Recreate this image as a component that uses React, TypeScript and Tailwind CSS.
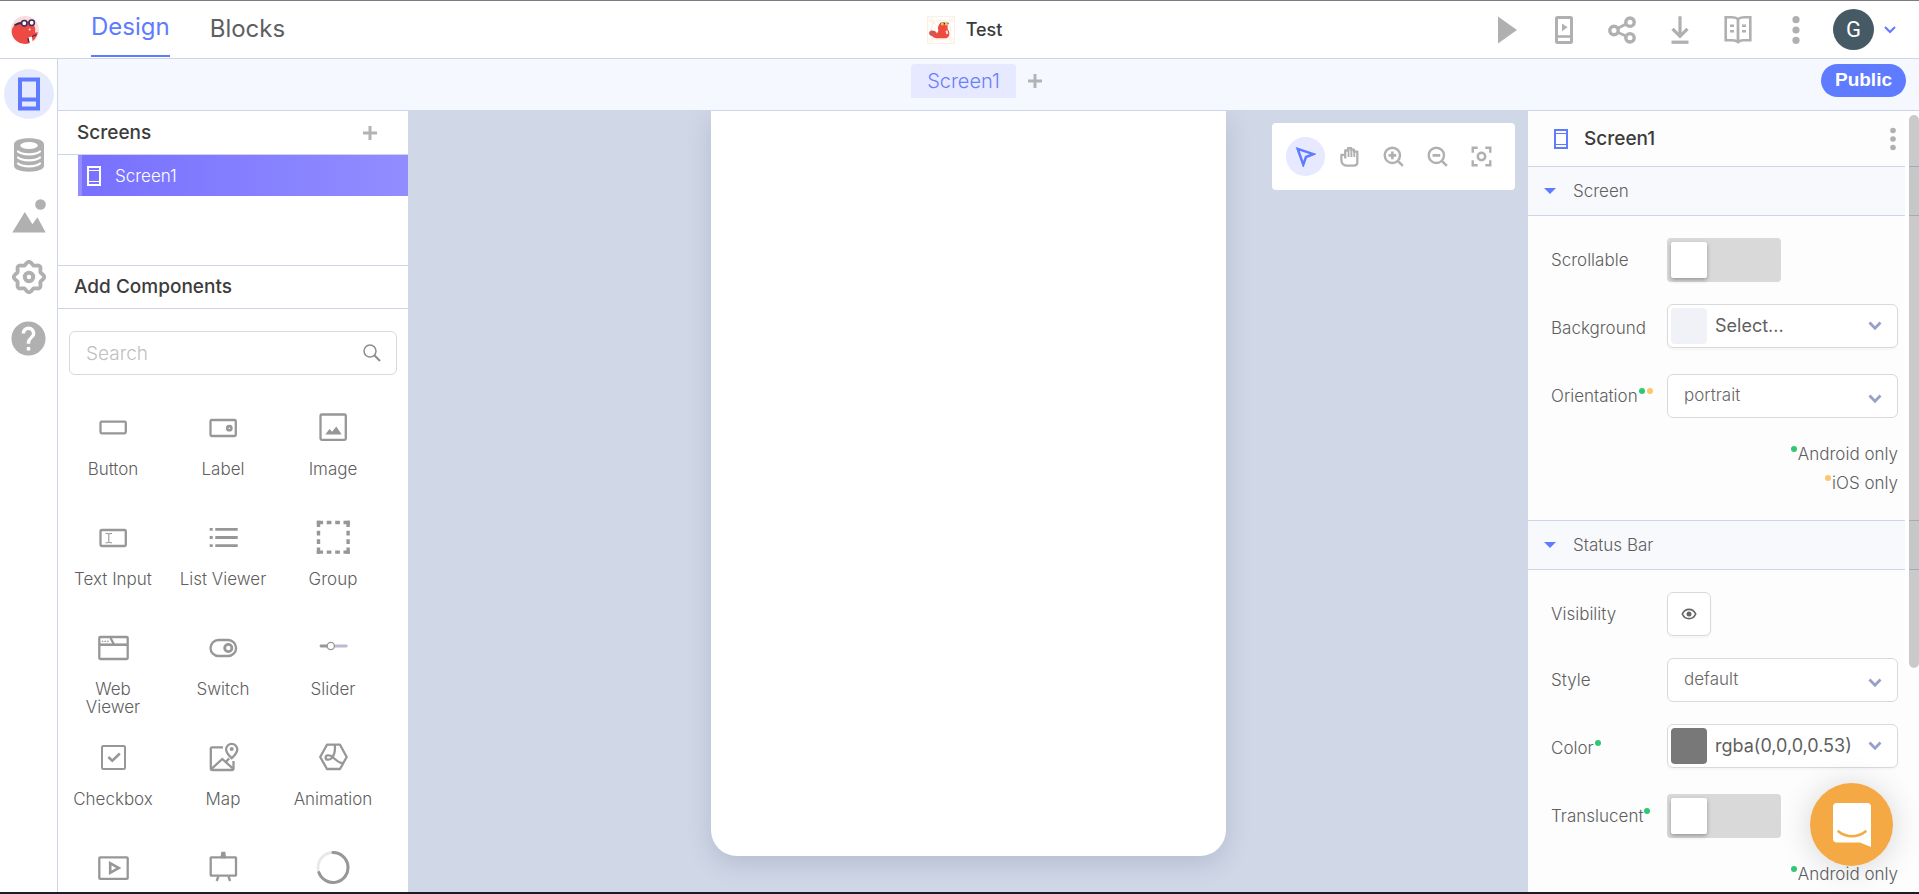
import { ReactNode, useState } from "react";
import { MdHelp } from "react-icons/md";

interface IconProps {
  size?: number;
  box?: number;
  stroke?: number;
  children: ReactNode;
}

function Icon({ size = 34, box = 34, stroke = 2, children }: IconProps) {
  return (
    <svg
      width={size}
      height={size}
      viewBox={`0 0 ${box} ${box}`}
      fill="none"
      stroke="currentColor"
      strokeWidth={stroke}
      className="shrink-0"
      aria-hidden="true"
    >
      {children}
    </svg>
  );
}

// outline of the settings cog: a circle with eight soft lobes
const cogPoints = Array.from({ length: 96 }, (_, i) => {
  const a = (i / 96) * Math.PI * 2;
  const r = 13.8 + 1.4 * Math.cos(a * 8);
  return `${(17 + r * Math.sin(a)).toFixed(2)},${(17 - r * Math.cos(a)).toFixed(2)}`;
}).join(" ");

function BeaverLogo() {
  return (
    <svg width={28} height={28} viewBox="0 0 28 28" aria-hidden="true">
      <circle cx="14" cy="14" r="14" fill="#f9dcdb" />
      <path
        d="M.8 15C1 10.500 5 7.500 9 6c4-1.800 10-1.500 13 1.500 2 2.500 2.600 6 2 9l2.800-.3c-.8 5.400-4.800 10-10.300 11.600C8 29 .4 23 .8 15z"
        fill="#ee4a43"
      />
      <path d="M3.500 9.200c2.500-1.600 5-2.200 8-2.200" stroke="#3b2a5c" strokeWidth="1.800" fill="none" />
      <circle cx="13.300" cy="7.300" r="2.700" fill="#fff" stroke="#3b2a5c" strokeWidth="1.500" />
      <circle cx="20.700" cy="6.800" r="2.700" fill="#fff" stroke="#3b2a5c" strokeWidth="1.500" />
      <circle cx="18.700" cy="13.500" r="1.100" fill="#ffd9d6" />
      <path d="M17.300 21.500l3.400-1 1.200 5.500-2.700 1.500z" fill="#fff" />
      <path d="M17 21.800l.6 4.400M21 20.500l4.500-2" stroke="#3b2a5c" strokeWidth="1.200" />
    </svg>
  );
}

function ProjectLogo() {
  return (
    <svg width={28} height={28} viewBox="0 0 28 28" fill="none" aria-hidden="true">
      <g stroke="#fdf0e2" strokeWidth="1">
        <rect x=".5" y=".5" width="27" height="27" />
        <path d="M5 0v28M23 0v28M0 5h28M0 23h28M0 0l28 28M28 0L0 28" />
        <circle cx="14" cy="14" r="10" />
      </g>
      <ellipse cx="6" cy="17.500" rx="4" ry="2.800" fill="#d8544f" transform="rotate(20 6 17.500)" />
      <path
        d="M5.500 20.500c3-.5 5-3 6-6.500-.6-.800-.8-1.500-.5-2.500C11.500 8.500 13 6.500 16 6.500c3.500 0 5 2 4.700 4.700-.1 1-.2 1.600.3 2.300 1.500 2 1.800 4.800.7 6.800-.8 1.700-2.500 2-5 2H11c-2.300 0-4.500-.6-5.500-1.800z"
        fill="#ee4a3f"
      />
      <path d="M13.500 7.500h8" stroke="#3b2a5c" strokeWidth="1.500" />
      <circle cx="15.300" cy="8" r="1.500" fill="#f6c445" />
      <circle cx="19.300" cy="8" r="1.500" fill="#f6c445" />
      <path d="M18.500 15l2-.8.8 3.500-2 .6z" fill="#fbe3e0" />
    </svg>
  );
}

function PhoneSmallIcon() {
  return (
    <svg width={14} height={20} viewBox="0 0 14 20" fill="none" stroke="currentColor" aria-hidden="true">
      <rect x="1" y="1" width="12" height="18" strokeWidth="2" />
      <path d="M2 4.500h10M2 15.500h10" strokeWidth="1" />
    </svg>
  );
}

function PlusIcon() {
  return (
    <svg width={14} height={14} viewBox="0 0 14 14" stroke="#b3b3b3" strokeWidth="3" aria-hidden="true">
      <path d="M7 0v14M0 7h14" />
    </svg>
  );
}

function Chevron({ className = "" }: { className?: string }) {
  return (
    <svg
      width={14}
      height={10}
      viewBox="0 0 14 10"
      fill="none"
      stroke="#97a0c8"
      strokeWidth="2.800"
      className={className}
      aria-hidden="true"
    >
      <path d="M1.500 1.500L7 7.200l5.500-5.700" />
    </svg>
  );
}

const railItems = [
  {
    label: "Design",
    active: true,
    icon: (
      <Icon>
        <rect x="8" y="2.500" width="18" height="29" strokeWidth="4" />
        <path d="M9 22.500h16" strokeWidth="4" />
      </Icon>
    ),
  },
  {
    label: "Data",
    icon: (
      <Icon>
        <path
          d="M2 6.500C2 2.500 8 .3 17 .3s15 2.200 15 6.200v21c0 4-6 6.200-15 6.200S2 31.500 2 27.500z"
          fill="currentColor"
          stroke="none"
        />
        <ellipse cx="17" cy="7.500" rx="8.800" ry="3.500" fill="#fff" stroke="none" />
        <path
          d="M6 13.500c2 2 6.500 2.800 11 2.800s9-.8 11-2.800M6 19.500c2 2 6.500 2.800 11 2.800s9-.8 11-2.800M6 25.500c2 2 6.500 2.800 11 2.800s9-.8 11-2.800"
          stroke="#fff"
          strokeWidth="2.200"
          strokeLinecap="round"
        />
      </Icon>
    ),
  },
  {
    label: "Assets",
    icon: (
      <Icon>
        <g fill="currentColor" stroke="none">
          <circle cx="28.500" cy="5.500" r="5.300" />
          <path d="M.3 33.500L12.800 13l7.600 12.300 5-7L33.700 33.500z" />
        </g>
      </Icon>
    ),
  },
  {
    label: "Settings",
    icon: (
      <Icon>
        <polygon points={cogPoints} strokeWidth="3.800" strokeLinejoin="round" />
        <circle cx="17" cy="17" r="4.200" strokeWidth="4" />
      </Icon>
    ),
  },
  { label: "Help", icon: <MdHelp size={41} /> },
];

const headerActions = [
  { label: "Play", icon: <path d="M7 1.500L26 15 7 28.500z" fill="currentColor" stroke="none" /> },
  {
    label: "Live test",
    icon: (
      <>
        <rect x="7.500" y="2.600" width="15" height="24.800" rx="1" strokeWidth="3" />
        <path d="M8 21.500h14" strokeWidth="2.600" />
        <path d="M13 8.500l5.600 3.800L13 16.200z" fill="currentColor" stroke="none" />
      </>
    ),
  },
  {
    label: "Share",
    icon: (
      <>
        <g strokeWidth="3.400">
          <circle cx="7" cy="15.500" r="4.200" />
          <circle cx="23" cy="7.200" r="4.200" />
          <circle cx="23" cy="22.800" r="4.200" />
        </g>
        <path d="M10.500 13.500l9-4.700M10.500 17.200l9 4" strokeWidth="2.800" />
      </>
    ),
  },
  {
    label: "Download",
    icon: (
      <>
        <path d="M15 1.200v20M7.500 13.800l7.500 7.400 7.500-7.400" strokeWidth="3.200" />
        <path d="M6.500 27.200h17" strokeWidth="3.300" />
      </>
    ),
  },
  {
    label: "Docs",
    icon: (
      <>
        <path
          d="M15 4c-2-1.400-4.500-1.700-6.500-1.700H2.700v23h7c2 0 4 .6 5.300 1.900 1.300-1.300 3.300-1.900 5.300-1.900h7v-23h-5.800c-2 0-4.500.3-6.500 1.700z"
          strokeWidth="2.600"
        />
        <path d="M15 4v23" strokeWidth="2.800" />
        <path d="M7 10.800h4M7 16.200h4M19 10.800h4M19 16.200h4" strokeWidth="2.400" />
      </>
    ),
  },
  {
    label: "More",
    icon: (
      <g fill="currentColor" stroke="none">
        <circle cx="15" cy="4.700" r="3.600" />
        <circle cx="15" cy="15" r="3.600" />
        <circle cx="15" cy="25.300" r="3.600" />
      </g>
    ),
  },
];

const groupSides = ["M.8 2.500h33", "M.8 32.100h33", "M2.500 .8v33", "M32.100 .8v33"];

interface ComponentItem {
  name: string;
  iconOnly?: boolean;
  icon: ReactNode;
}

const componentItems: ComponentItem[] = [
  { name: "Button", icon: <rect x="4.500" y="11.700" width="25.300" height="11.600" rx="1.200" /> },
  {
    name: "Label",
    icon: (
      <>
        <rect x="4.500" y="10" width="25.300" height="16" rx="1.200" />
        <circle cx="23.300" cy="18.200" r="2.100" strokeWidth="2.600" />
      </>
    ),
  },
  {
    name: "Image",
    icon: (
      <>
        <rect x="4.500" y="4.500" width="25.300" height="25.300" rx="1.200" />
        <path d="M9.300 24.500l4.200-5.400 2.600 2.600 4.200-5.300 5.400 8.100z" fill="currentColor" stroke="none" />
      </>
    ),
  },
  {
    name: "Text Input",
    icon: (
      <>
        <rect x="4.500" y="10" width="25.300" height="16" rx="1.200" />
        <path d="M9.500 13.500h2.200l1.100.8 1.100-.8h2.200M9.500 22.700h2.200l1.100-.8 1.100.8h2.200M12.800 14v8.500" strokeWidth="1.100" />
      </>
    ),
  },
  {
    name: "List Viewer",
    icon: <path d="M3.700 9.400h3M9.300 9.400h22.400M3.700 17.500h3M9.300 17.500h22.400M3.700 25.600h3M9.300 25.600h22.400" strokeWidth="2.800" />,
  },
  {
    name: "Group",
    icon: groupSides.map((d) => (
      <path key={d} d={d} strokeWidth="3.400" strokeDasharray="6.300 3.600 4.700 3.800 4.700 3.600 6.300 50" />
    )),
  },
  {
    name: "Web Viewer",
    icon: (
      <>
        <rect x="3.300" y="7" width="28.400" height="22" rx="1" />
        <path d="M3.300 14.700h28.400" strokeWidth="2.600" />
        <path d="M14.500 8l3.500 6.500" />
        <path d="M5.800 11.300h8" strokeWidth="1.200" strokeDasharray="1.500 1.200" />
      </>
    ),
  },
  {
    name: "Switch",
    icon: (
      <>
        <rect x="4.500" y="10" width="25.600" height="16" rx="8" />
        <circle cx="22.300" cy="18" r="3.600" strokeWidth="2.800" />
      </>
    ),
  },
  {
    name: "Slider",
    icon: (
      <>
        <path d="M5 16h7" strokeWidth="2.800" strokeLinecap="round" />
        <path d="M19 16h11.300" stroke="#bcb9d6" strokeWidth="2.800" strokeLinecap="round" />
        <circle cx="14.800" cy="16" r="3.600" strokeWidth="1.300" fill="#fff" />
      </>
    ),
  },
  {
    name: "Checkbox",
    icon: (
      <>
        <rect x="6" y="6" width="23" height="23" rx="1.200" strokeWidth="2" />
        <path d="M12.300 17l4 3.700 7.500-7.200" strokeWidth="2.500" />
      </>
    ),
  },
  {
    name: "Map",
    icon: (
      <>
        <path d="M17 7.300H6c-.8 0-1.200.5-1.200 1.200v20.300c0 .8.500 1.200 1.200 1.200h20.300c.8 0 1.200-.5 1.200-1.200V21" />
        <path d="M5.500 28.800L16.300 19l11 9.800M20 21.800l3.200-3.400" />
        <path d="M25.700 18.200c-3-3-5.600-5.500-5.600-8.800a5.600 5.600 0 0 1 11.200 0c0 3.300-2.600 5.800-5.600 8.800z" />
        <circle cx="25.700" cy="9" r="2" fill="currentColor" stroke="none" />
      </>
    ),
  },
  {
    name: "Animation",
    icon: (
      <>
        <path d="M11 4.700h13L30.700 17 24 29H11L4.200 17z" strokeLinejoin="round" />
        <path d="M18.800 5c.5 5-.2 10-3 13-2 2.200-6 2.200-6.200-.2-.2-2.700 4-3.300 7-.8 3.200 2.800 6 6.600 11.200 6" />
      </>
    ),
  },
  {
    name: "Video",
    iconOnly: true,
    icon: (
      <>
        <rect x="3.300" y="7.300" width="28.400" height="21.600" rx="1" />
        <path d="M14.200 13.200v9.600l8.600-4.800z" strokeWidth="2.600" />
      </>
    ),
  },
  {
    name: "Canvas",
    iconOnly: true,
    icon: (
      <>
        <rect x="4.700" y="7.300" width="25.300" height="18.300" rx=".5" />
        <path d="M15.700 7l.6-4h2l.6 4z" fill="currentColor" />
        <path d="M12.300 26.500l-1.600 4.500M22.500 26.500l1.600 4.500" />
      </>
    ),
  },
  {
    name: "Loading Icon",
    iconOnly: true,
    icon: (
      <>
        <circle cx="17" cy="17.500" r="15" stroke="#e8e8e8" strokeWidth="2.800" />
        <path d="M17 2.500a15 15 0 1 1-14.100 20.100" strokeWidth="3" strokeLinecap="round" />
      </>
    ),
  },
];

const tools = [
  { label: "Select", icon: <path d="M2.800 3l16.500 5.500-7.800 3-2.800 8z" strokeWidth="2.600" /> },
  {
    label: "Pan",
    icon: (
      <>
        <path
          d="M6.500 13V4.700h3V2.300h3.200v1.500h3v2h3.500V17c0 2.200-1.500 3.500-3.700 3.500H7.700C4.700 20.500 2.500 18 2.500 15V9.300h3"
          strokeWidth="2.400"
          strokeLinejoin="round"
        />
        <path d="M10 4v7.500M13 4v7.500M16 6v5.500" strokeWidth="2" />
      </>
    ),
  },
  {
    label: "Zoom in",
    icon: (
      <>
        <circle cx="9.800" cy="9.800" r="8" strokeWidth="2.500" />
        <path d="M15.500 15.500l5.300 5.300M9.800 5.800v8M5.800 9.800h8" strokeWidth="2.700" />
      </>
    ),
  },
  {
    label: "Zoom out",
    icon: (
      <>
        <circle cx="9.800" cy="9.800" r="8" strokeWidth="2.500" />
        <path d="M15.500 15.500l5.300 5.300M5.800 9.800h8" strokeWidth="2.700" />
      </>
    ),
  },
  {
    label: "Fit to screen",
    icon: (
      <>
        <path d="M1.800 7V1.800H7M15 1.800h5.200V7M20.200 15v5.200H15M7 20.200H1.800V15" strokeWidth="2.500" />
        <circle cx="11" cy="11" r="3.900" strokeWidth="2.600" />
      </>
    ),
  },
];

function Dot({ ios }: { ios?: boolean }) {
  return (
    <span
      className={`inline-block w-[6px] h-[6px] rounded-full align-super mb-px ml-px mr-px ${
        ios ? "bg-[#ffc56b]" : "bg-[#2fc973]"
      }`}
    />
  );
}

interface RowProps {
  label: string;
  id: string;
  dots?: ReactNode;
  children: ReactNode;
}

function Row({ label, id, dots, children }: RowProps) {
  return (
    <div className="flex items-center">
      <label htmlFor={id} className="w-[116px] shrink-0 text-[17px] leading-6 font-light whitespace-nowrap">
        {label}
        {dots}
      </label>
      {children}
    </div>
  );
}

function Toggle({ id }: { id: string }) {
  const [on, setOn] = useState(false);
  return (
    <input
      id={id}
      type="checkbox"
      checked={on}
      onChange={() => setOn((v) => !v)}
      className="appearance-none w-[114px] h-11 p-1 rounded-sm bg-[#d9d9d9] checked:bg-[#5f7bff] flex checked:justify-end before:block before:w-9 before:h-9 before:rounded-xs before:bg-white before:shadow-[0_2px_4px_rgba(0,0,0,0.3)]"
    />
  );
}

function SelectBox({ id, value }: { id: string; value: string }) {
  return (
    <div className="relative flex-1">
      <select
        id={id}
        defaultValue={value}
        className="appearance-none w-full h-11 pl-4 rounded-md border border-[#d9d9d9] bg-white text-[17px] font-light text-[#666]"
      >
        <option>{value}</option>
      </select>
      <Chevron className="absolute right-4 top-5 pointer-events-none" />
    </div>
  );
}

function ColorPicker({ id, value, swatch }: { id: string; value: string; swatch: string }) {
  return (
    <button
      id={id}
      className="flex-1 h-11 flex items-center pl-[3px] pr-[15px] mb-1 rounded-md border border-[#d9d9d9] bg-white shadow-[0_2px_2px_rgba(0,0,0,0.03)]"
    >
      <span className={`w-9 h-9 rounded-sm ${swatch}`} />
      <span className="flex-1 pl-2 text-left text-lg whitespace-nowrap">{value}</span>
      <Chevron />
    </button>
  );
}

function SectionHeader({ title }: { title: string }) {
  return (
    <button className="w-full h-[50px] flex items-center gap-[17px] pl-4 border-y border-[#cdd6e6] bg-[#f8f9fc] text-[17px] leading-6 font-light">
      <svg width={12} height={6} viewBox="0 0 12 6" fill="#5f7bff" aria-hidden="true">
        <path d="M0 0h12L6 6z" />
      </svg>
      {title}
    </button>
  );
}

export default function App() {
  const [query, setQuery] = useState("");

  return (
    <div className="h-screen flex flex-col overflow-hidden bg-white border-t border-t-[#7d7a85] border-b-2 border-b-[#1c1b27] font-['Inter',sans-serif] text-[#5f5f5f]">
      {/* Top bar */}
      <header className="h-[58px] shrink-0 grid grid-cols-[1fr_auto_1fr] items-center border-b border-[#cdd6e6]">
        <div className="flex items-center h-full pl-[11px]">
          <BeaverLogo />
          <nav className="flex h-full ml-[52px] gap-10 text-2xl leading-7">
            <a href="#design" className="h-14 pt-3 border-b-2 border-[#5f7bff] text-[#5f7bff]">
              Design
            </a>
            <a href="#blocks" className="h-14 pt-[14px]">
              Blocks
            </a>
          </nav>
        </div>

        <div className="flex items-center gap-[11px] pl-[10px]">
          <ProjectLogo />
          <span className="text-lg font-medium text-[#3c3c3c]">Test</span>
        </div>

        <div className="flex items-center justify-end pr-[21px]">
          {headerActions.map((a) => (
            <button key={a.label} aria-label={a.label} className="w-[58px] flex justify-center text-[#b0b0b0]">
              <Icon size={30} box={30}>
                {a.icon}
              </Icon>
            </button>
          ))}
          <button aria-label="Account" className="flex items-center">
            <span className="w-[57px] flex justify-center">
              <span className="w-[41px] h-[41px] rounded-full bg-[#455a64] text-white text-[22px] font-['Roboto',sans-serif] flex items-center justify-center">
                G
              </span>
            </span>
            <svg width={16} height={10} viewBox="0 0 16 10" fill="none" stroke="#5f7bff" strokeWidth="2" aria-hidden="true">
              <path d="M3 2l5 5 5-5" />
            </svg>
          </button>
        </div>
      </header>

      <div className="flex flex-1 min-h-0">
        {/* Icon rail */}
        <aside className="w-[58px] shrink-0 pt-[10px] flex flex-col items-center gap-[11px] border-r border-[#cdd6e6]">
          {railItems.map((item) => (
            <button
              key={item.label}
              aria-label={item.label}
              className={`w-[50px] h-[50px] rounded-full flex items-center justify-center ${
                item.active ? "bg-[#e6eaff] text-[#5f7bff]" : "text-[#b0b0b0]"
              }`}
            >
              {item.icon}
            </button>
          ))}
        </aside>

        <div className="flex-1 min-w-0 flex flex-col">
          {/* Screen tabs */}
          <div className="h-[52px] pb-2 shrink-0 grid grid-cols-[1fr_auto_1fr] items-center border-b border-[#cdd6e6] bg-[#f5f8fe]">
            <div />
            <div className="flex items-center gap-3 mr-6">
              <button className="h-[34px] px-4 rounded-t bg-[#e6e9ff] text-[#6a7ff8] text-xl font-light">Screen1</button>
              <button aria-label="Add screen">
                <PlusIcon />
              </button>
            </div>
            <div className="flex justify-end pr-[13px]">
              <button className="h-[33px] px-[14px] rounded-full bg-[#5f7bff] text-white text-[19px] font-bold font-['Liberation_Sans',sans-serif]">
                Public
              </button>
            </div>
          </div>

          <div className="flex-1 min-h-0 flex">
            {/* Screens and components */}
            <section className="w-[350px] shrink-0 flex flex-col overflow-hidden">
              <div className="h-11 shrink-0 flex items-center justify-between pl-[19px] pr-[31px] border-b border-[#cdd6e6]">
                <h2 className="text-[19px] leading-7 font-medium text-[#3c3c3c]">Screens</h2>
                <button aria-label="New screen">
                  <PlusIcon />
                </button>
              </div>
              <div className="h-[111px] shrink-0 border-b border-[#cdd6e6]">
                <button className="ml-5 h-[41px] w-[330px] flex items-center gap-[14px] pl-[5px] border-l-4 border-[#938dff] bg-linear-to-r from-[#7870ff] to-[#928dff] text-white text-[17px] leading-6 font-light">
                  <PhoneSmallIcon />
                  Screen1
                </button>
              </div>
              <div className="h-[43px] shrink-0 flex items-center pl-4 border-b border-[#cdd6e6]">
                <h2 className="text-[19px] leading-7 font-medium text-[#3c3c3c]">Add Components</h2>
              </div>

              <div className="relative shrink-0 mt-[22px] mx-[11px]">
                <input
                  type="text"
                  aria-label="Search components"
                  placeholder="Search"
                  value={query}
                  onChange={(e) => setQuery(e.target.value)}
                  className="w-full h-11 pl-4 pr-12 rounded-md border border-[#d9d9d9] text-[19px] font-light placeholder:text-[#bfbfbf] focus:outline-none"
                />
                <svg
                  width={18}
                  height={18}
                  viewBox="0 0 18 18"
                  fill="none"
                  stroke="#8c8c8c"
                  strokeWidth="1.500"
                  className="absolute right-4 top-[13px]"
                  aria-hidden="true"
                >
                  <circle cx="7" cy="7" r="6" />
                  <path d="M11.300 11.300l5.700 5.700" strokeWidth="2" />
                </svg>
              </div>

              <div className="grid grid-cols-3 auto-rows-[110px] pt-8 pr-5">
                {componentItems
                  .filter((c) => c.name.toLowerCase().includes(query.toLowerCase()))
                  .map((c) => (
                    <div key={c.name} className="flex flex-col items-center gap-[13px] px-[10px] cursor-grab">
                      <div className="h-10 flex items-center text-[#979797]">
                        <Icon stroke={2.3}>{c.icon}</Icon>
                      </div>
                      {!c.iconOnly && (
                        <span className="text-[17px] leading-[18px] font-light text-center">{c.name}</span>
                      )}
                    </div>
                  ))}
              </div>
            </section>

            {/* Canvas */}
            <main className="relative flex-1 min-w-0 pb-9 flex justify-center bg-[#d0d7e6] overflow-hidden">
              <div className="w-[515px] rounded-b-[26px] bg-white shadow-[0_8px_24px_rgba(70,90,130,0.2)]" />
              <div className="absolute top-3 right-[13px] h-[67px] px-[14px] flex items-center gap-[5px] rounded-sm bg-white">
                {tools.map((t, i) => (
                  <button
                    key={t.label}
                    aria-label={t.label}
                    className={`w-[39px] h-[39px] rounded-full flex items-center justify-center ${
                      i === 0 ? "bg-[#e6e9ff] text-[#5f7bff]" : "text-[#b0b0b0]"
                    }`}
                  >
                    <Icon size={21} box={22}>
                      {t.icon}
                    </Icon>
                  </button>
                ))}
              </div>
            </main>

            {/* Properties */}
            <section className="relative w-[391px] shrink-0 bg-[#fdfdfd] overflow-hidden">
              <div className="h-[55px] flex items-center pl-[26px] pr-[23px]">
                <span className="text-[#5f7bff]">
                  <PhoneSmallIcon />
                </span>
                <h2 className="flex-1 pl-4 text-[19px] leading-7 font-medium text-[#3c3c3c]">Screen1</h2>
                <button aria-label="Screen options">
                  <svg width={6} height={24} viewBox="0 0 6 24" fill="#b0b0b0" aria-hidden="true">
                    <circle cx="3" cy="3.500" r="2.800" />
                    <circle cx="3" cy="12" r="2.800" />
                    <circle cx="3" cy="20.500" r="2.800" />
                  </svg>
                </button>
              </div>

              <SectionHeader title="Screen" />
              <div className="pt-[22px] pl-[23px] pr-[21px] flex flex-col gap-[22px]">
                <Row label="Scrollable" id="scrollable">
                  <Toggle id="scrollable" />
                </Row>
                <Row label="Background" id="background">
                  <ColorPicker id="background" value="Select..." swatch="bg-[#f1f2f7]" />
                </Row>
                <Row label="Orientation" id="orientation" dots={<><Dot /><Dot ios /></>}>
                  <SelectBox id="orientation" value="portrait" />
                </Row>
                <div className="pb-[22px] text-right text-[17px] leading-[29px] font-light">
                  <p><Dot />Android only</p>
                  <p><Dot ios />iOS only</p>
                </div>
              </div>

              <SectionHeader title="Status Bar" />
              <div className="pt-[22px] pl-[23px] pr-[21px] flex flex-col gap-[22px]">
                <Row label="Visibility" id="visibility">
                  <button
                    id="visibility"
                    className="w-11 h-11 flex items-center justify-center rounded-md border border-[#d9d9d9] bg-white shadow-[0_2px_2px_rgba(0,0,0,0.03)]"
                  >
                    <svg width={16} height={12} viewBox="0 0 16 12" fill="none" stroke="#666" aria-hidden="true">
                      <path d="M1.300 6C2.700 3 5 1.300 8 1.300S13.300 3 14.700 6C13.300 9 11 10.700 8 10.700S2.700 9 1.300 6z" strokeWidth="1.700" />
                      <circle cx="8" cy="6" r="2.500" fill="#666" stroke="none" />
                    </svg>
                  </button>
                </Row>
                <Row label="Style" id="style">
                  <SelectBox id="style" value="default" />
                </Row>
                <Row label="Color" id="color" dots={<Dot />}>
                  <ColorPicker id="color" value="rgba(0,0,0,0.53)" swatch="bg-[#787878]" />
                </Row>
                <Row label="Translucent" id="translucent" dots={<Dot />}>
                  <Toggle id="translucent" />
                </Row>
                <p className="text-right text-[17px] leading-[29px] font-light"><Dot />Android only</p>
              </div>

              {/* Scroll thumb */}
              <div className="absolute right-0 top-1 w-[10px] h-[553px] rounded-full bg-black/20 shadow-[0_0_0_4px_white]" />
            </section>
          </div>
        </div>
      </div>

      {/* Chat launcher */}
      <button
        aria-label="Open chat"
        className="fixed right-[26px] bottom-7 w-[83px] h-[83px] rounded-full bg-[#f4a944] flex items-center justify-center shadow-[0_2px_32px_rgba(0,0,0,0.16)]"
      >
        <svg width={40} height={46} viewBox="0 0 40 46" fill="none" aria-hidden="true">
          <path d="M4.500 1h31c2 0 3.500 1.500 3.500 3.500V45l-11-4.500H4.500C2.500 40.500 1 39 1 37V4.500C1 2.500 2.500 1 4.500 1z" fill="#fff" />
          <path d="M6.500 29.500c8 6.300 19 6.300 27 0" stroke="#f4a944" strokeWidth="2.600" strokeLinecap="round" />
        </svg>
      </button>
    </div>
  );
}
